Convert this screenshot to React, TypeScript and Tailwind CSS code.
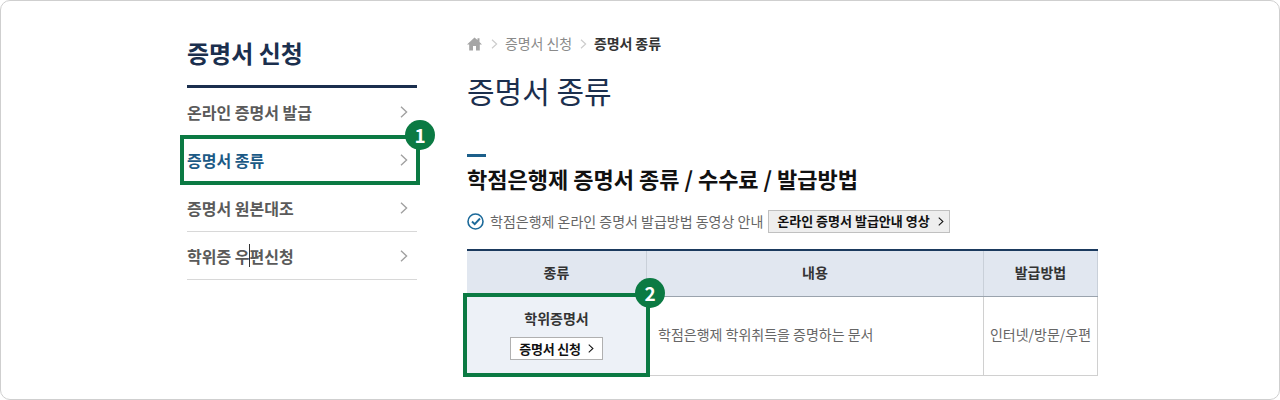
import React from "react";

const font = { fontFamily: '"Noto Sans CJK KR", "Noto Sans", sans-serif' };

function Chevron({ className = "" }: { className?: string }) {
  return (
    <svg width="8" height="12" viewBox="0 0 9 14" fill="none" className={className}>
      <path d="M1 1l6.5 6L1 13" stroke="currentColor" strokeWidth="1.6" />
    </svg>
  );
}

function SideItem({ label, active, children }: { label: string; active?: boolean; children?: React.ReactNode }) {
  return (
    <div className={`relative flex h-[48px] items-center justify-between border-b pr-[9px] border-[#d8d8d8] text-[16px] font-bold ${active ? "text-[#1c5a86]" : "text-[#5a5a5a]"}`}>
      <span className="pt-[1px]">{label}</span>
      <Chevron className="text-[#a0a0a0]" />
      {children}
    </div>
  );
}

function Badge({ n }: { n: string }) {
  return (
    <div className="absolute right-[-19px] top-[-19px] flex h-[30px] w-[30px] items-center justify-center rounded-full bg-[#0b7a43] text-[19px] font-bold text-white">
      {n}
    </div>
  );
}

export default function App() {
  return (
    <div style={font} className="h-[400px] w-[1280px] overflow-hidden bg-white">
      <div className="flex h-[400px] rounded-[10px] border border-[#cfcfcf] pl-[186px] pt-[33px]">
        <aside className="w-[230px]">
          <h2 className="h-[51px] text-[24px] font-bold leading-[37px] text-[#1b2f4e]">증명서 신청</h2>
          <div className="h-[3px] bg-[#1b2f4e]" />
          <SideItem label="온라인 증명서 발급" />
          <SideItem label="증명서 종류" active>
            <div className="absolute bottom-[-2px] left-[-7px] right-[-3px] top-[-1px] border-[4px] border-[#0b7a43]">
              <Badge n="1" />
            </div>
          </SideItem>
          <SideItem label="증명서 원본대조" />
          <SideItem label="학위증 우편신청">
            <div className="absolute bottom-[12px] left-[62px] top-[12px] w-px bg-[#333333]" />
          </SideItem>
        </aside>

        <main className="ml-[50px] w-[631px]">
          <nav className="flex h-[20px] items-center text-[14px] tracking-[-0.1px] text-[#8a8a8a]">
            <svg width="15" height="14" viewBox="0 0 15 14" fill="#a5a5a5">
              <path d="M7.5 0.5L0 7.5h2.2V13.5h3.8V9h3v4.5h3.8V7.5H15L12.5 5V1.2h-2v1.9z" />
            </svg>
            <Chevron className="ml-[9px] mr-[7px] h-[10px] w-[7px] text-[#cccccc]" />
            <span className="pb-[2px]">증명서 신청</span>
            <Chevron className="ml-[8px] mr-[7px] h-[10px] w-[7px] text-[#cccccc]" />
            <span className="pb-[2px] font-bold text-[#333333]">증명서 종류</span>
          </nav>
          <h1 className="mt-[14px] text-[30px] font-normal leading-[44px] text-[#1b2f4e]">증명서 종류</h1>
          <div className="mt-[42px] h-[3px] w-[19px] bg-[#1c5f8a]" />
          <h3 className="mt-[3px] text-[22px] font-bold leading-[36px] text-[#111111]">학점은행제 증명서 종류 / 수수료 / 발급방법</h3>
          <div className="mt-[13px] flex h-[24px] items-center text-[14px] text-[#666666]">
            <svg width="17" height="17" viewBox="0 0 17 17" fill="none" stroke="#1c6a9a">
              <circle cx="8.5" cy="8.5" r="7.5" strokeWidth="1.6" />
              <path d="M5 8.5l2.7 2.7L13 5.5" strokeWidth="1.9" />
            </svg>
            <span className="ml-[6px]">학점은행제 온라인 증명서 발급방법 동영상 안내</span>
            <span className="ml-[5px] flex h-[23px] w-[182px] items-center border border-[#c0c0c0] bg-[#eeeeee] pl-[8px] text-[13px] font-bold text-[#111111]">
              온라인 증명서 발급안내 영상
              <Chevron className="ml-[8px] h-[9px] w-[6px]" />
            </span>
          </div>
          <div className="mt-[16px] border-t-2 border-[#1b3a5e]">
            <div className="grid grid-cols-[180px_337px_114px] text-[14px]">
              <div className="flex h-[45px] items-center justify-center border-r border-[#c9d0d9] bg-[#e1e7f0] pb-[3px] font-bold text-[#333333]">종류</div>
              <div className="flex h-[45px] items-center justify-center border-r border-[#c9d0d9] bg-[#e1e7f0] pb-[3px] font-bold text-[#333333]">내용</div>
              <div className="flex h-[45px] items-center justify-center border-r border-[#c9d0d9] bg-[#e1e7f0] pb-[3px] font-bold text-[#333333]">발급방법</div>
            </div>
            <div className="grid grid-cols-[180px_337px_114px] border-t border-[#9aa3ad] text-[14px]">
              <div className="relative flex h-[79px] flex-col items-center border-b border-[#d0d0d0] bg-[#edf1f7] pr-[1px] pt-[11px]">
                <span className="font-bold leading-[20px] text-[#333333]">학위증명서</span>
                <span className="mt-[9px] flex h-[23px] w-[93px] items-center justify-center border border-[#b0b0b0] bg-white text-[13px] font-bold tracking-[-0.2px] text-[#111111]">
                  증명서 신청
                  <Chevron className="ml-[7px] h-[9px] w-[6px]" />
                </span>
                <div className="absolute bottom-[-2px] left-[-4px] right-[-3px] top-[-4px] border-[4px] border-[#0b7a43]">
                  <Badge n="2" />
                </div>
              </div>
              <div className="flex h-[79px] items-center border-b border-r border-[#d0d0d0] pb-[3px] pl-[11px] text-[#666666]">학점은행제 학위취득을 증명하는 문서</div>
              <div className="flex h-[79px] items-center justify-center border-b border-r border-[#d0d0d0] pb-[3px] text-[#666666]">인터넷/방문/우편</div>
            </div>
          </div>
        </main>
      </div>
    </div>
  );
}
